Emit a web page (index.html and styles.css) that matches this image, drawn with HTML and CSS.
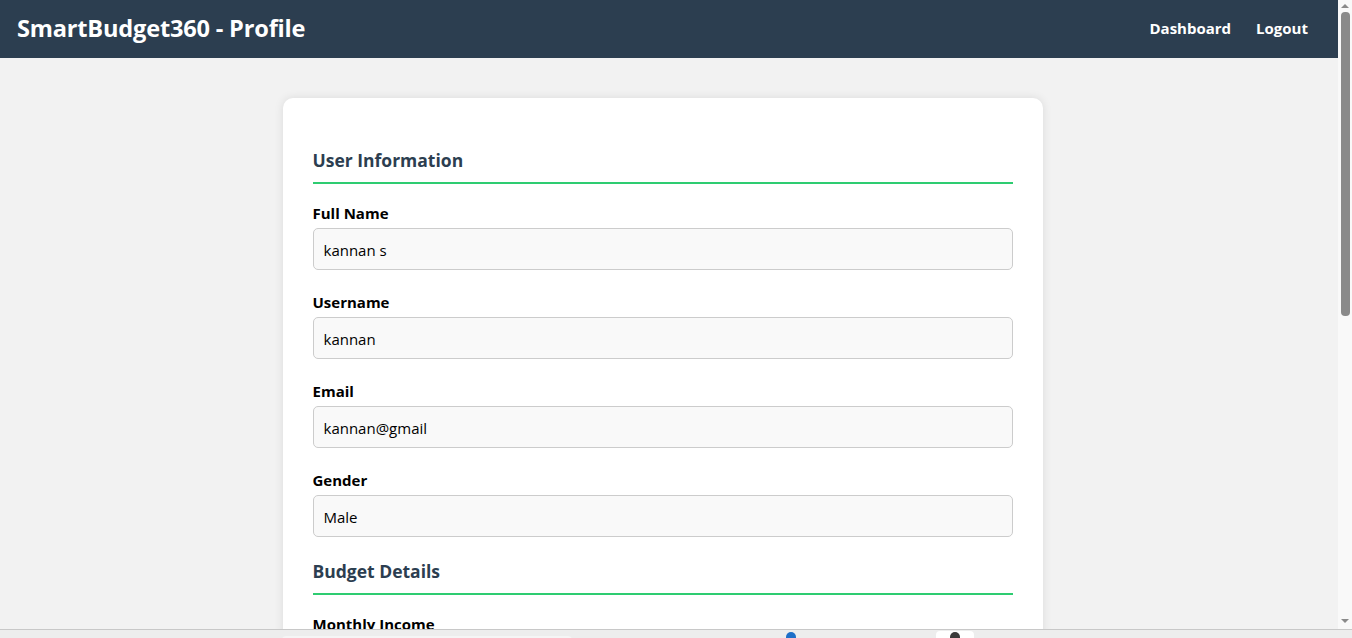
FILE: index.html
```html
<!DOCTYPE html>
<html lang="en">
<head>
<meta charset="utf-8">
<title>SmartBudget360 - Profile</title>
<link rel="stylesheet" href="styles.css">
</head>
<body>
<div class="screen">
  <div class="viewport">
    <div class="page">
      <header class="topbar">
        <h1 class="brand">SmartBudget360 - Profile</h1>
        <nav class="nav">
          <a href="#" class="nav-link">Dashboard</a>
          <a href="#" class="nav-link">Logout</a>
        </nav>
      </header>
      <main class="content">
        <section class="card">
          <h2 class="section-title">User Information</h2>
          <div class="field">
            <label class="field-label">Full Name</label>
            <div class="field-input">kannan s</div>
          </div>
          <div class="field">
            <label class="field-label">Username</label>
            <div class="field-input">kannan</div>
          </div>
          <div class="field">
            <label class="field-label">Email</label>
            <div class="field-input">kannan@gmail</div>
          </div>
          <div class="field">
            <label class="field-label">Gender</label>
            <div class="field-input">Male</div>
          </div>
          <h2 class="section-title">Budget Details</h2>
          <div class="field">
            <label class="field-label">Monthly Income</label>
          </div>
        </section>
      </main>
    </div>
    <div class="scrollbar">
      <div class="arrow arrow-up"></div>
      <div class="track"><div class="thumb"></div></div>
      <div class="arrow arrow-down"></div>
    </div>
  </div>
  <div class="taskbar">
    <div class="tb-search"></div>
    <div class="tb-dot"></div>
    <div class="tb-app"><span class="tb-app-icon"></span></div>
  </div>
</div>
</body>
</html>
```
FILE: styles.css
```css
* { box-sizing: border-box; }
html, body { margin: 0; padding: 0; height: 100%; overflow: hidden; }
body {
  font-family: "Open Sans", "Noto Sans", "Liberation Sans", sans-serif;
  background: #f2f2f2;
  color: #000;
}
.screen { display: flex; flex-direction: column; height: 638px; width: 1352px; }
.viewport { display: flex; height: 629px; overflow: hidden; }
.page { flex: 1; min-width: 0; background: #f2f2f2; overflow: hidden; }

.topbar {
  height: 58px;
  background: #2c3e50;
  display: flex;
  align-items: center;
  justify-content: space-between;
  padding: 0 30px 2px 17px;
}
.brand {
  margin: 0;
  color: #fff;
  font-size: 23.6px;
  line-height: 30px;
  font-weight: 700;
  letter-spacing: -0.2px;
}
.nav { display: flex; gap: 25px; }
.nav-link {
  color: #fff;
  text-decoration: none;
  font-weight: 700;
  font-size: 15px;
  line-height: 20px;
}

.content { display: flex; justify-content: center; padding-top: 40px; }
.card {
  width: 760px;
  min-height: 700px;
  background: #fff;
  border-radius: 10px;
  box-shadow: 0 0 10px rgba(0,0,0,0.1);
  padding: 30px;
  margin-left: -13px;
}
.section-title {
  margin: 20px 0 19px;
  font-size: 17.5px;
  line-height: 24px;
  font-weight: 700;
  color: #2c3e50;
  padding-bottom: 10px;
  border-bottom: 2px solid #2ecc71;
}
.field { margin-bottom: 22px; }
.field-label {
  display: block;
  font-size: 15px;
  line-height: 21px;
  margin-bottom: 4px;
  font-weight: 700;
}
.field-input {
  height: 42px;
  padding: 3px 10px 0;
  border: 1px solid #ccc;
  border-radius: 5px;
  background: #f9f9f9;
  font-size: 15px;
  line-height: 36px;
  color: #000;
}

.scrollbar {
  width: 14px;
  background: #f9f9f9;
  display: flex;
  flex-direction: column;
  align-items: center;
}
.arrow { width: 0; height: 0; border-left: 4px solid transparent; border-right: 4px solid transparent; }
.arrow-up { border-bottom: 4px solid #8a8a8a; margin: 4px 0 3px; }
.arrow-down { border-top: 4px solid #8a8a8a; margin: 3px 0 6px; }
.track { flex: 1; width: 100%; display: flex; justify-content: center; }
.thumb { width: 9px; height: 304px; background: #8a8a8a; border-radius: 4px; margin-top: 1px; }

.taskbar {
  height: 9px;
  border-top: 1px solid #c8c8c8;
  background: #ededed;
  display: flex;
  align-items: flex-start;
}
.tb-search { width: 290px; height: 4px; margin: 6px 0 0 282px; background: #f5f5f5; border-radius: 4px 4px 0 0; }
.tb-dot { width: 10px; height: 6px; margin: 2px 0 0 214px; background: #1e6fc8; border-radius: 5px 5px 0 0; }
.tb-app { width: 38px; height: 7px; margin: 1px 0 0 140px; background: #fff; border-radius: 4px 4px 0 0; display: flex; justify-content: center; }
.tb-app-icon { width: 10px; height: 6px; margin-top: 1px; background: #3a3a3a; border-radius: 5px 5px 0 0; }
```
